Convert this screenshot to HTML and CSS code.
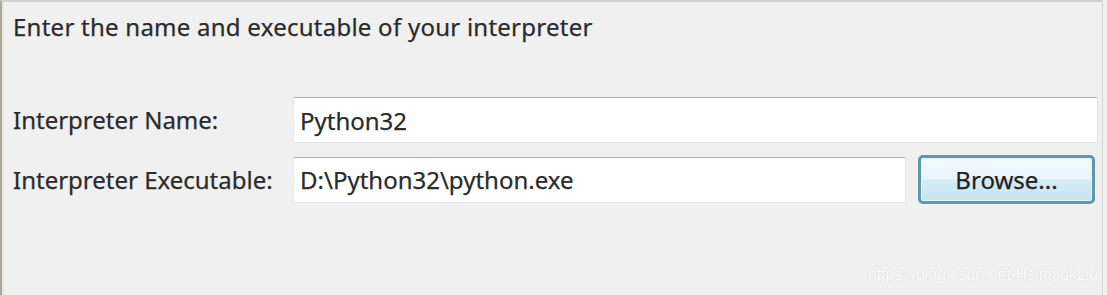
FILE: index.html
```html
<!doctype html>
<html>
    <head>
        <title>Interpreter</title>
        <link rel="stylesheet" href="styles.css">
    </head>
    <body>
        <div class="dialog">
            <div class="heading">Enter the name and executable of your interpreter</div>

            <div class="form">
                <label class="label" for="name">Interpreter Name:</label>
                <div class="field">
                    <input class="text-box" id="name" type="text" value="Python32">
                </div>

                <label class="label" for="exe">Interpreter Executable:</label>
                <div class="field">
                    <input class="text-box" id="exe" type="text" value="D:\Python32\python.exe">
                    <button class="browse-btn">Browse...</button>
                </div>
            </div>

            <div class="watermark">https://blog.csdn.net/HsinglukLiu</div>
        </div>
    </body>
</html>
```

FILE: styles.css
```css
body {
    margin: 0;
    padding: 0;
    background-color: #f0f0f0;
    font-family: 'Noto Sans', 'Open Sans', Arial, sans-serif;
    color: #2b2b2b;
}

.dialog {
    position: relative;
    height: 295px;
    box-sizing: border-box;
    margin-right: 4px;
    border-top: 2px solid #d2d0cc;
    border-left: 2px solid #a9a69c;
    border-right: 1px solid #d8d8d8;
    box-shadow: inset 2px 0 0 #ece6d6;
    padding: 9px 4px 0 11px;
}

.heading {
    font-size: 24px;
    line-height: 32px;
    letter-spacing: 0.25px;
    -webkit-text-stroke: 0.25px #2b2b2b;
}

/* Label column + field column */
.form {
    display: grid;
    grid-template-columns: 280px 1fr;
    row-gap: 12px;
    margin-top: 54px;
    align-items: center;
}

.label {
    font-size: 24px;
    line-height: 30px;
    -webkit-text-stroke: 0.25px #2b2b2b;
}

.field {
    display: flex;
    gap: 12px;
    align-items: center;
}

.text-box {
    flex: 1;
    min-width: 0;
    height: 46px;
    box-sizing: border-box;
    padding: 0 6px;
    font-family: inherit;
    font-size: 24px;
    color: #2b2b2b;
    -webkit-text-stroke: 0.25px #2b2b2b;
    background: #fff;
    border: 1px solid #e2e5ea;
    border-top-color: #acaeb4;
    border-radius: 2px;
    outline: none;
}

.browse-btn {
    width: 177px;
    height: 49px;
    margin-right: 3px;
    font-family: inherit;
    font-size: 24px;
    color: #222;
    -webkit-text-stroke: 0.25px #222;
    border: 3px solid #5c9aa8;
    border-radius: 5px;
    background: linear-gradient(to bottom, #f4fafd 0%, #e8f4fa 48%, #d4ebf6 52%, #c6e4f2 100%);
    box-shadow: inset 0 0 0 1px #e4f6fb;
}

.watermark {
    position: absolute;
    right: 4px;
    bottom: 11px;
    font-family: 'Liberation Sans', Arial, sans-serif;
    font-size: 16px;
    color: #fbfbfb;
    text-shadow: 0 0 1px #cfcfcf;
}
```
